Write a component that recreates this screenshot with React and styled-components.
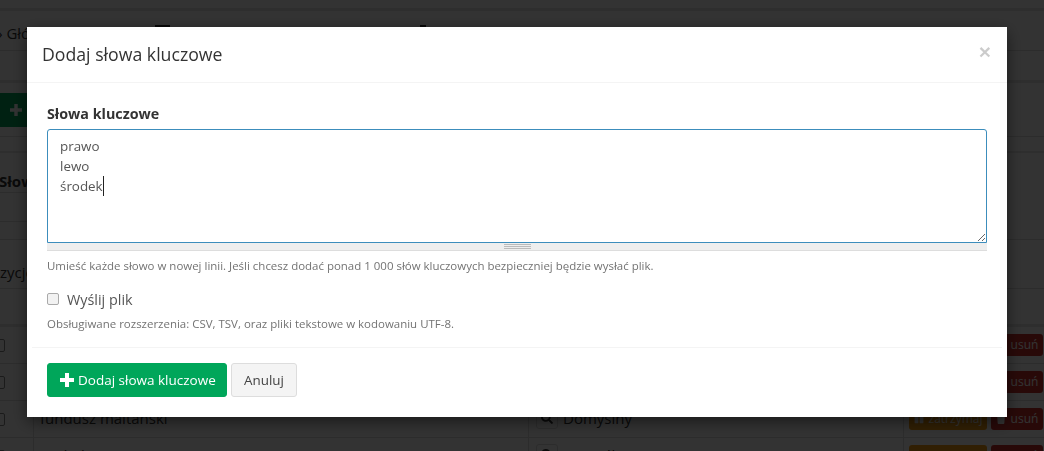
import React from "react";
import styled, { createGlobalStyle } from "styled-components";
import { FaPause, FaTrash, FaSearch } from "react-icons/fa";

const Global = createGlobalStyle`
  html, body { margin: 0; padding: 0; height: 100%; overflow: hidden; background: #fff; }
  body { font-family: "Open Sans", "Liberation Sans", sans-serif; font-size: 14px; color: #333; }
  * { box-sizing: border-box; }
`;

const Page = styled.div`
  width: 1044px;
  height: 451px;
  overflow: hidden;
`;
const TopBar = styled.div`
  height: 11px;
  border-bottom: 3px solid #e6e6e6;
`;
const NavRow = styled.div`
  height: 40px;
  display: flex;
  align-items: flex-start;
  border-bottom: 1px solid #ddd;
  padding-top: 12px;
  font-size: 15px;
  white-space: nowrap;
`;
const NavCrumb = styled.span`
  width: 157px;
  line-height: 18px;
  margin-left: -2px;
  padding-top: 1px;
`;
const NavIcon = styled.span`
  display: block;
  width: ${(p) => p.$w}px;
  height: 6px;
  background: #222;
  margin-right: ${(p) => p.$mr}px;
  margin-top: 2px;
`;
const Gap = styled.div`
  height: 32px;
  border-bottom: 3px solid #e6e6e6;
`;
const Toolbar = styled.div`
  height: 54px;
  padding-top: 10px;
  border-bottom: 1px solid #ddd;
`;
const AddButton = styled.div`
  width: 60px;
  height: 34px;
  margin-left: -20px;
  padding-left: 30px;
  background: #00a65a;
  color: #fff;
  display: flex;
  align-items: center;
`;
const Spacer = styled.div`
  height: 16px;
  border-bottom: 2px solid #e6e6e6;
`;
const SectionHead = styled.div`
  height: 40px;
  width: 200px;
  padding-top: 18px;
  margin-left: -1px;
  border-bottom: 1px solid #ddd;
  font-weight: 700;
  font-size: 15px;
  line-height: 20px;
`;
const SectionInner = styled.div`
  height: 29px;
  width: 200px;
  border-bottom: 1px solid #ddd;
`;
const SectionFoot = styled.div`
  height: 18px;
  border-bottom: 1px solid #ddd;
`;
const FilterRow = styled.div`
  height: 49px;
  padding-top: 22px;
  margin-left: -18px;
  border-bottom: 1px solid #ddd;
  font-size: 15px;
  line-height: 20px;
`;
const TableHead = styled.div`
  height: 38px;
  border-bottom: 3px solid #e6e6e6;
`;
const Row = styled.div`
  height: 37px;
  display: grid;
  grid-template-columns: 34px 495px 375px 1fr;
  border-bottom: 1px solid #ddd;
  font-size: 15px;
`;
const CheckCell = styled.div`
  border-right: 1px solid #ddd;
  display: flex;
  align-items: center;
`;
const RowCheck = styled.span`
  display: block;
  width: 13px;
  height: 13px;
  margin-left: -8px;
  border: 1px solid #888;
  border-radius: 2px;
`;
const NameCell = styled.div`
  border-right: 1px solid #ddd;
  padding-left: 6px;
  line-height: 34px;
`;
const TypeCell = styled.div`
  border-right: 1px solid #ddd;
  padding-left: 7px;
  padding-bottom: 2px;
  display: flex;
  align-items: center;
  gap: 5px;
`;
const IconBox = styled.span`
  width: 22px;
  height: 22px;
  border: 1px solid #ddd;
  border-radius: 3px;
  display: flex;
  align-items: center;
  justify-content: center;
  font-size: 12px;
`;
const ActionCell = styled.div`
  padding-left: 5px;
  padding-bottom: 1px;
  display: flex;
  align-items: center;
  gap: 4px;
`;
const ActionBtn = styled.span`
  height: 22px;
  width: ${(p) => p.$w}px;
  border-radius: 3px;
  background: ${(p) => p.$bg};
  color: #fff;
  font-size: 12px;
  display: flex;
  align-items: center;
  justify-content: center;
  gap: 5px;
  svg { font-size: 10px; }
`;

const Backdrop = styled.div`
  position: fixed;
  inset: 0;
  background: rgba(0, 0, 0, 0.8);
  padding: 27px 37px 0 27px;
`;
const Modal = styled.div`
  width: 980px;
  height: 390px;
  background: #fff;
  box-shadow: 0 5px 15px rgba(0, 0, 0, 0.5);
`;
const ModalHeader = styled.div`
  height: 56px;
  border-bottom: 1px solid #f4f4f4;
  padding: 0 15px;
  display: flex;
  align-items: center;
  justify-content: space-between;
`;
const Title = styled.h4`
  margin: 0;
  font-size: 17.7px;
  font-weight: 400;
  line-height: 25px;
  color: #333;
`;
const Close = styled.span`
  font-family: "Liberation Sans", Arial, sans-serif;
  font-size: 21px;
  font-weight: 700;
  line-height: 1;
  color: #000;
  opacity: 0.2;
  margin-top: -6px;
  margin-right: 1px;
`;
const ModalBody = styled.div`
  padding: 21px 20px 0;
`;
const Label = styled.div`
  font-weight: 700;
  font-size: 14.3px;
  line-height: 20px;
  margin-bottom: 5px;
`;
const TextBox = styled.div`
  width: 940px;
  height: 114px;
  border: 1px solid #3c8dbc;
  border-radius: 3px 3px 0 0;
  padding: 6px 12px;
  font-size: 13.4px;
  line-height: 20px;
  color: #555;
  white-space: pre-line;
  overflow: auto;
  resize: vertical;
  background: #fff;
`;
const Caret = styled.span`
  display: inline-block;
  width: 1px;
  height: 20px;
  background: #222;
  vertical-align: top;
`;
const Grippie = styled.div`
  width: 940px;
  height: 8px;
  background: #eee;
  border-bottom: 1px solid #ddd;
  display: flex;
  justify-content: center;
  padding-top: 1px;
`;
const GripLines = styled.span`
  display: block;
  width: 27px;
  height: 5px;
  border-top: 1px solid #bbb;
  border-bottom: 1px solid #bbb;
  &::after {
    content: "";
    display: block;
    margin-top: 1px;
    border-top: 1px solid #bbb;
  }
`;
const Help = styled.p`
  margin: 0;
  font-size: 11.48px;
  line-height: 16px;
  color: #737373;
`;
const HelpTop = styled(Help)`
  margin-top: 7px;
`;
const CheckRow = styled.label`
  display: flex;
  align-items: center;
  margin-top: 15px;
  height: 20px;
  font-size: 14.4px;
  color: #555;
  gap: 8px;
`;
const Check = styled.input`
  appearance: none;
  margin: 0;
  width: 12px;
  height: 12px;
  border: 1px solid #aaa;
  border-radius: 2px;
  background: #f2f2f2;
`;
const HelpBottom = styled(Help)`
  margin-top: 7px;
`;
const ModalFooter = styled.div`
  margin: 15px 5px 0;
  border-top: 1px solid #f4f4f4;
  padding: 15px 15px;
  display: flex;
  gap: 4px;
`;
const Primary = styled.button`
  height: 34px;
  width: 180px;
  border: 1px solid #00a65a;
  border-radius: 3px;
  background: #00a65a;
  color: #fff;
  font: 13.5px "Open Sans", sans-serif;
  display: flex;
  align-items: center;
  gap: 4px;
  padding: 0 0 0 12px;
`;
const Secondary = styled.button`
  height: 34px;
  width: 66px;
  border: 1px solid #ddd;
  border-radius: 3px;
  background: #f4f4f4;
  color: #444;
  font: 13.4px "Open Sans", sans-serif;
  padding: 0;
`;

const PlusIcon = ({ size }) => (
  <svg width={size} height={size} viewBox="0 0 14 14" fill="currentColor" aria-hidden="true">
    <path d="M5 0h4v5h5v4H9v5H5V9H0V5h5z" />
  </svg>
);

const rows = [
  { name: "kredyt", type: "Domyślny" },
  { name: "bank", type: "Domyślny" },
  { name: "fundusz maltański", type: "Domyślny" },
  { name: "podatki", type: "Domyślny" },
];

export default function App() {
  return (
    <>
      <Global />
      <Page>
        <TopBar />
        <NavRow>
          <NavCrumb>› Główna</NavCrumb>
          <NavIcon $w={15} $mr={250} />
          <NavIcon $w={6} $mr={0} />
        </NavRow>
        <Gap />
        <Toolbar>
          <AddButton><PlusIcon size={12} /></AddButton>
        </Toolbar>
        <Spacer />
        <SectionHead>Słowa kluczowe</SectionHead>
        <SectionInner />
        <SectionFoot />
        <FilterRow>Pozycje</FilterRow>
        <TableHead />
        {rows.map((r) => (
          <Row key={r.name}>
            <CheckCell><RowCheck /></CheckCell>
            <NameCell>{r.name}</NameCell>
            <TypeCell>
              <IconBox><FaSearch /></IconBox>
              {r.type}
            </TypeCell>
            <ActionCell>
              <ActionBtn $w={78} $bg="#f39c12"><FaPause />zatrzymaj</ActionBtn>
              <ActionBtn $w={52} $bg="#c9302c"><FaTrash />usuń</ActionBtn>
            </ActionCell>
          </Row>
        ))}
      </Page>
      <Backdrop>
        <Modal>
          <ModalHeader>
            <Title>Dodaj słowa kluczowe</Title>
            <Close>×</Close>
          </ModalHeader>
          <ModalBody>
            <Label>Słowa kluczowe</Label>
            <TextBox role="textbox">
              {"prawo\nlewo\nśrodek"}
              <Caret />
            </TextBox>
            <Grippie><GripLines /></Grippie>
            <HelpTop>
              Umieść każde słowo w nowej linii. Jeśli chcesz dodać ponad 1 000 słów kluczowych bezpieczniej będzie wysłać plik.
            </HelpTop>
            <CheckRow>
              <Check type="checkbox" />
              Wyślij plik
            </CheckRow>
            <HelpBottom>
              Obsługiwane rozszerzenia: CSV, TSV, oraz pliki tekstowe w kodowaniu UTF-8.
            </HelpBottom>
          </ModalBody>
          <ModalFooter>
            <Primary><PlusIcon size={14} />Dodaj słowa kluczowe</Primary>
            <Secondary>Anuluj</Secondary>
          </ModalFooter>
        </Modal>
      </Backdrop>
    </>
  );
}
